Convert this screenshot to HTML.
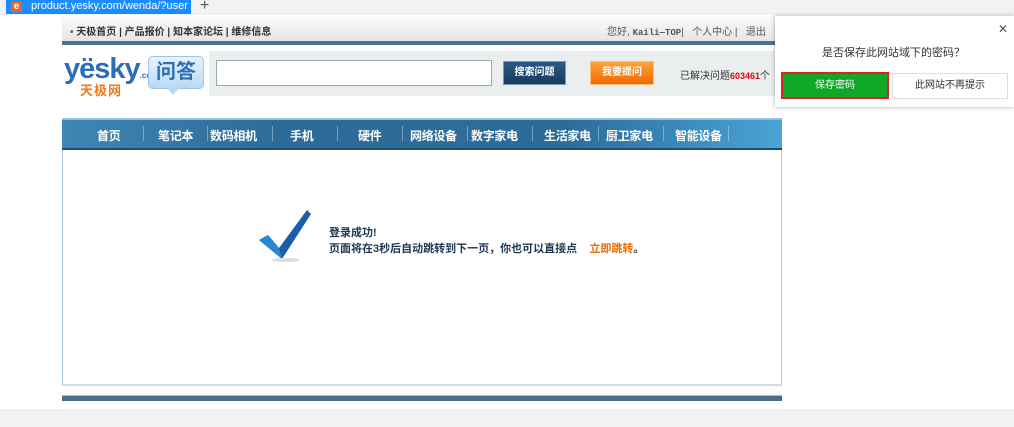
<!DOCTYPE html>
<html><head><meta charset="utf-8">
<style>
*{margin:0;padding:0;box-sizing:border-box}
body{width:1014px;height:427px;overflow:hidden;background:#fff;font-family:"Liberation Sans","Noto Sans CJK SC",sans-serif;position:relative;font-size:12px;color:#333}
.abs{position:absolute}
.n{position:absolute;top:127px;color:#fff;font-size:12px;font-weight:bold;white-space:nowrap;letter-spacing:-0.3px}
.s{position:absolute;top:126px;width:1px;height:15px;background:rgba(255,255,255,.35)}
</style></head><body>
<div class="abs" style="left:0;top:0;width:1014px;height:15px;background:#f2f2f2"></div>
<div class="abs" style="left:6px;top:0;width:185px;height:14px;background:#1a8cff;color:#fff;font-size:11px;line-height:13px;padding-left:25px">product.yesky.com/wenda/?user <span style="margin-left:4px;opacity:.8">✕</span></div>
<div class="abs" style="left:11px;top:1px;width:11px;height:11px;background:#e8632b;border-radius:2px;color:#fff;font-size:10px;line-height:11px;text-align:center;font-weight:bold">e</div>
<div class="abs" style="left:200px;top:-3px;font-size:16px;color:#555">+</div>

<div class="abs" style="left:62px;top:16px;width:720px;height:25px;background:linear-gradient(#fafafa,#e6e6e6)"></div>
<div class="abs" style="left:70px;top:23px;font-size:10px;color:#333;font-weight:bold;white-space:nowrap"><span style="color:#666">•</span> 天极首页 | 产品报价 | 知本家论坛 | 维修信息</div>
<div class="abs" style="left:607px;top:23px;font-size:10px;color:#555;white-space:nowrap">您好, <b style="font-family:'Liberation Mono',monospace;font-size:9px">Kaili—TOP</b>|&nbsp;&nbsp; 个人中心 |&nbsp;&nbsp; 退出</div>
<div class="abs" style="left:62px;top:41px;width:720px;height:4px;background:#4f6f8d"></div>

<div class="abs" style="left:64px;top:55px;font-size:29px;font-weight:bold;color:#2a6db8;letter-spacing:-1px;line-height:28px">yësky<span style="font-size:8px;letter-spacing:0">.com</span></div>
<div class="abs" style="left:80px;top:80px;font-size:13px;font-weight:bold;color:#f07a16;letter-spacing:1px">天极网</div>
<div class="abs" style="left:148px;top:56px;width:56px;height:33px;background:linear-gradient(#e8f3fd,#b9d9f3);border:1px solid #9cc4e6;border-radius:5px;color:#2d6fb4;font-size:20px;font-weight:bold;text-align:center;line-height:30px">问答</div>
<div class="abs" style="left:167px;top:88px;width:0;height:0;border-left:6px solid transparent;border-right:6px solid transparent;border-top:7px solid #b9d9f3"></div>
<div class="abs" style="left:209px;top:51px;width:573px;height:45px;background:#ebeeef"></div>
<div class="abs" style="left:216px;top:60px;width:276px;height:26px;background:#fff;border:1px solid #9aa6b0"></div>
<div class="abs" style="left:503px;top:61px;width:63px;height:24px;background:linear-gradient(#2a5a85,#183b5e);border:1px solid #7a9ab8;color:#fff;font-size:10px;font-weight:bold;text-align:center;line-height:22px">搜索问题</div>
<div class="abs" style="left:590px;top:61px;width:64px;height:24px;background:linear-gradient(#ffa23a,#f06a00);border:1px solid #f7c27a;color:#fff;font-size:10px;font-weight:bold;text-align:center;line-height:22px">我要提问</div>
<div class="abs" style="left:680px;top:67px;font-size:10px;color:#333;white-space:nowrap">已解决问题<b style="color:#e60012;font-size:9px">603461</b>个</div>

<div class="abs" style="left:62px;top:118px;width:720px;height:32px;background:linear-gradient(90deg,#3f86b4,#2e6b98 30%,#2d6c99 70%,#49a4d6);border-top:2px solid #8fc2e1;border-bottom:2px solid #1f4d70"></div>
<span class="n" style="left:97px">首页</span><span class="s" style="left:143px"></span>
<span class="n" style="left:158px">笔记本</span><span class="s" style="left:207px"></span>
<span class="n" style="left:210px">数码相机</span><span class="s" style="left:272px"></span>
<span class="n" style="left:290px">手机</span><span class="s" style="left:337px"></span>
<span class="n" style="left:358px">硬件</span><span class="s" style="left:402px"></span>
<span class="n" style="left:410px">网络设备</span><span class="s" style="left:467px"></span>
<span class="n" style="left:471px">数字家电</span><span class="s" style="left:532px"></span>
<span class="n" style="left:544px">生活家电</span><span class="s" style="left:598px"></span>
<span class="n" style="left:606px">厨卫家电</span><span class="s" style="left:663px"></span>
<span class="n" style="left:675px">智能设备</span><span class="s" style="left:728px"></span>

<div class="abs" style="left:62px;top:150px;width:720px;height:236px;border:1px solid #b8cde0;border-top:none;border-bottom:2px solid #d4dde6"></div>
<svg class="abs" style="left:256px;top:206px" width="56" height="56" viewBox="0 0 56 56">
<path d="M3 34 L12 29 L23 42 L51 4 L55 8 L26 53 Z" fill="#1a5fa8"/>
<path d="M3 34 L12 29 L23 42 L26 53 Z" fill="#2a86d0"/>
<ellipse cx="30" cy="54" rx="14" ry="2" fill="#ddd"/>
</svg>
<div class="abs" style="left:329px;top:224px;font-size:11px;color:#1f3552;font-weight:bold">登录成功!</div>
<div class="abs" style="left:329px;top:240px;font-size:11px;color:#1f3552;font-weight:bold;white-space:nowrap">页面将在3秒后自动跳转到下一页，你也可以直接点&nbsp;&nbsp;&nbsp; <span style="color:#f06a00">立即跳转</span>。</div>

<div class="abs" style="left:62px;top:395px;width:720px;height:6px;background:#496f8e;border-top:1px solid #a9c0d2"></div>
<div class="abs" style="left:0;top:409px;width:1014px;height:18px;background:#f2f2f2"></div>

<div class="abs" style="left:775px;top:16px;width:239px;height:91px;background:#fff;box-shadow:0 0 4px rgba(0,0,0,.35)"></div>
<div class="abs" style="left:998px;top:22px;font-size:12px;color:#555">✕</div>
<div class="abs" style="left:822px;top:44px;font-size:11px;color:#333;white-space:nowrap">是否保存此网站域下的密码？</div>
<div class="abs" style="left:781px;top:72px;width:108px;height:27px;border:2px solid #e02020;background:#12a827;color:#fff;font-size:10px;text-align:center;line-height:23px">保存密码</div>
<div class="abs" style="left:892px;top:73px;width:116px;height:26px;border:1px solid #ddd;background:#fff;color:#333;font-size:10px;text-align:center;line-height:24px">此网站不再提示</div>
</body></html>
